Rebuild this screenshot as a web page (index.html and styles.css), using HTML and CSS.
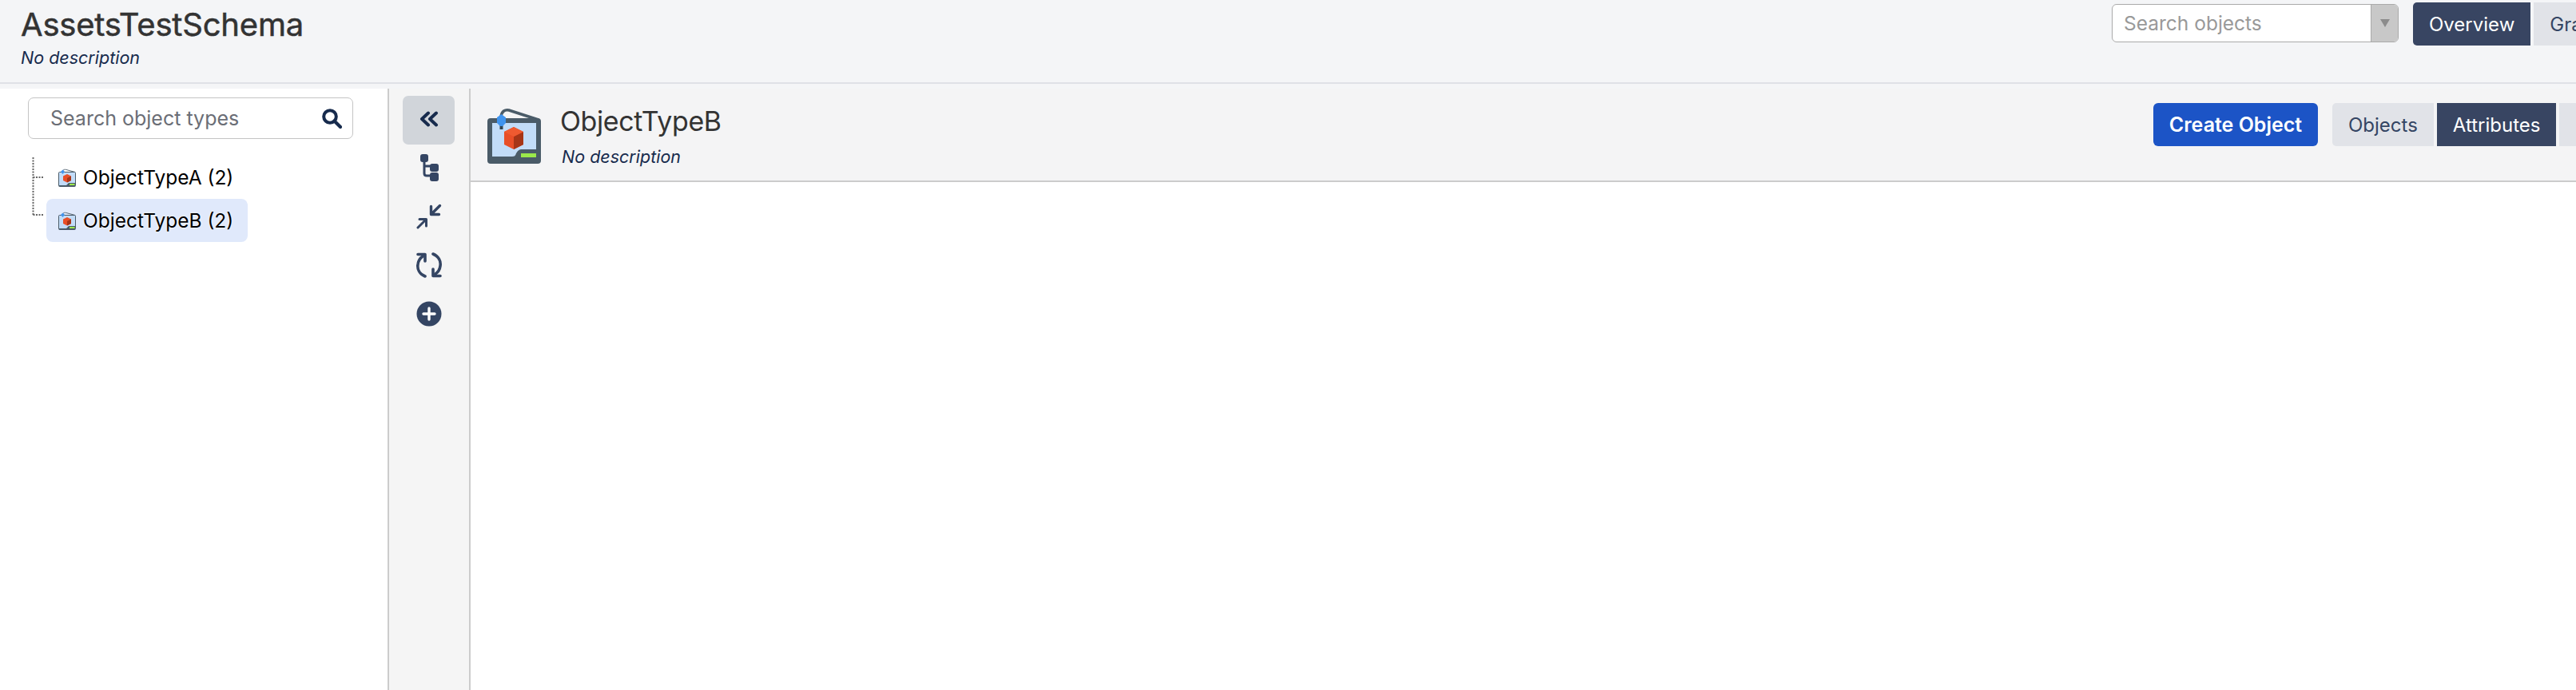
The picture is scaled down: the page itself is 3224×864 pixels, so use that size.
FILE: index.html
```html
<!DOCTYPE html>
<html lang="en">
<head>
  <meta charset="UTF-8" />
  <title>AssetsTestSchema</title>
  <link rel="stylesheet" href="styles.css">
</head>
<body>

  <svg class="sprite" aria-hidden="true">
    <symbol id="printer" viewBox="0 0 67 69">
      <path d="M17 10C18 3 22 1 27 2L64 14" fill="none" stroke="#4a5b68" stroke-width="3.5"/>
      <rect x="0" y="12" width="67" height="57" rx="4" fill="#4a5b68"/>
      <path d="M6 18H61V51H44C39 51 38 53 36 56C35 59 34 60 31 60H6Z" fill="#c2dcf8"/>
      <rect x="42" y="56" width="19" height="5" fill="#9be84b"/>
      <path d="M33 23L45 29V45L33 51L21 45V29Z" fill="#e84e27"/>
      <path d="M33 35L45 29V45L33 51Z" fill="#a63517"/>
      <path d="M33 23L45 29L33 35L21 29Z" fill="#ef5a30"/>
      <rect x="15.500" y="20" width="4" height="6" fill="#33434f"/>
      <path d="M17.500 7L23 11V18L19 22H16L12 18V11Z" fill="#3f93ee"/>
    </symbol>
    <symbol id="printer-small" viewBox="0 0 22 23">
      <path d="M5 4C6 1 8 1 10 1.500L21 4.500" fill="none" stroke="#5b6b78" stroke-width="1"/>
      <rect x="0.500" y="4.500" width="21" height="18" rx="1" fill="#c2dcf8" stroke="#4a5b68"/>
      <path d="M1 21H10L13 18H21V22.500H1Z" fill="#4a5b68"/>
      <rect x="14" y="19" width="6.500" height="2" fill="#9be84b"/>
      <path d="M11 7L16 9.500V15L11 17.500L6 15V9.500Z" fill="#e84e27"/>
      <path d="M11 12L16 9.500V15L11 17.500Z" fill="#a63517"/>
      <path d="M5.500 1.500L8 4L5.500 7L3 4Z" fill="#3f93ee"/>
    </symbol>
  </svg>

  <header class="schema-header">
    <div class="schema-title">
      <h1>AssetsTestSchema</h1>
      <p class="no-desc">No description</p>
    </div>
    <div class="schema-tools">
      <div class="object-search">
        <span class="object-search-text">Search objects</span>
        <span class="object-search-arrow"><i></i></span>
      </div>
      <div class="tabs">
        <a class="tab active">Overview</a>
        <a class="tab">Graph</a>
      </div>
    </div>
  </header>

  <div class="workspace">

    <!-- Type tree -->
    <aside class="type-panel">
      <div class="type-search">
        <span>Search object types</span>
        <svg class="type-search-icon" viewBox="0 0 25 25">
          <circle cx="10" cy="10" r="7.800" fill="none" stroke="#172b4d" stroke-width="4"/>
          <path d="M15.500 15.500L23 23" stroke="#172b4d" stroke-width="4.200" stroke-linecap="round"/>
        </svg>
      </div>
      <div class="tree">
        <svg class="tree-lines" width="14" height="76">
          <path d="M1.500 0V72M1.500 25H14M1.500 72H14" fill="none" stroke="#666" stroke-width="2" stroke-dasharray="2 1.500"/>
        </svg>
        <ul class="tree-list">
          <li class="tree-row">
            <svg class="tree-icon"><use href="#printer-small"/></svg>
            ObjectTypeA (2)
          </li>
          <li class="tree-row selected">
            <svg class="tree-icon"><use href="#printer-small"/></svg>
            ObjectTypeB (2)
          </li>
        </ul>
      </div>
    </aside>

    <!-- Toolbar -->
    <nav class="toolbar">
      <button class="tool active">
        <svg width="24" height="20" viewBox="0 0 24 20">
          <path d="M11 2.500L3 10L11 17.500M21 2.500L13 10L21 17.500" fill="none" stroke="#172b4d" stroke-width="4" stroke-linecap="round" stroke-linejoin="round"/>
        </svg>
      </button>
      <button class="tool">
        <svg width="24" height="34" viewBox="0 0 24 34">
          <path d="M6 6V24C6 26 7 27 9 27H15M6 15H15" fill="none" stroke="#344563" stroke-width="3"/>
          <rect x="1" y="0" width="10" height="10" rx="3" fill="#344563"/>
          <rect x="13" y="12" width="11" height="10" rx="3" fill="#344563"/>
          <rect x="13" y="23" width="11" height="11" rx="3" fill="#344563"/>
        </svg>
      </button>
      <button class="tool">
        <svg width="32" height="32" viewBox="0 0 32 32">
          <path d="M29.500 2.500L20 12M18.500 3.500V13.500H28.500" fill="none" stroke="#344563" stroke-width="3.400" stroke-linecap="round" stroke-linejoin="round"/>
          <path d="M2 30L11 21M4 19.500H12.500V28" fill="none" stroke="#344563" stroke-width="3" stroke-linecap="round" stroke-linejoin="round"/>
        </svg>
      </button>
      <button class="tool">
        <svg width="32" height="32" viewBox="0 0 32 32">
          <path d="M11 30C4 27 1 21 2 15C2.500 11 5 7 8 5" fill="none" stroke="#344563" stroke-width="3.600" stroke-linecap="round"/>
          <path d="M2 2.500H11V11" fill="none" stroke="#344563" stroke-width="3.600" stroke-linejoin="round" stroke-linecap="round"/>
          <path d="M21 2C28 5 31 11 30 17C29.500 21 27 25 24 27" fill="none" stroke="#344563" stroke-width="3.600" stroke-linecap="round"/>
          <path d="M30 29.500H21V21" fill="none" stroke="#344563" stroke-width="3.600" stroke-linejoin="round" stroke-linecap="round"/>
        </svg>
      </button>
      <button class="tool">
        <svg width="32" height="32" viewBox="0 0 32 32">
          <circle cx="16" cy="16" r="15.500" fill="#344563"/>
          <path d="M16 9V23M9 16H23" stroke="#fff" stroke-width="3.400" stroke-linecap="round"/>
        </svg>
      </button>
    </nav>

    <!-- Selected type -->
    <main class="type-main">
      <div class="type-header">
        <svg class="type-icon"><use href="#printer"/></svg>
        <div class="type-title">
          <h2>ObjectTypeB</h2>
          <p class="no-desc">No description</p>
        </div>
        <div class="type-actions">
          <button class="create-btn">Create Object</button>
          <div class="tabs">
            <a class="tab">Objects</a>
            <a class="tab active">Attributes</a>
            <a class="tab"></a>
          </div>
        </div>
      </div>
    </main>

  </div>

</body>
</html>
```

FILE: styles.css
```css
* {
  box-sizing: border-box;
  font-family: Inter, 'Liberation Sans', sans-serif;
}
html, body {
  height: 100%;
}
body {
  margin: 0;
  background: #f4f5f7;
  display: flex;
  flex-direction: column;
  overflow: hidden;
}
h1, h2, p, ul {
  margin: 0;
  padding: 0;
}
.sprite {
  display: none;
}

/* top bar */
.schema-header {
  display: flex;
  height: 105px;
  flex: none;
  border-bottom: 2px solid #dfe1e6;
}
.schema-title {
  flex: 1;
  padding: 8px 0 0 26px;
}
h1 {
  font-size: 40px;
  line-height: 46px;
  font-weight: 400;
  letter-spacing: -0.2px;
  color: #333;
  -webkit-text-stroke: 0.5px #333;
}
.no-desc {
  font-size: 21.500px;
  line-height: 26px;
  font-style: italic;
  color: #172b4d;
}
.schema-title .no-desc {
  margin-top: 5px;
}
.schema-tools {
  flex: none;
  width: 581px;
  display: flex;
  gap: 18px;
  padding-top: 3px;
  overflow: hidden;
}
.object-search {
  flex: none;
  width: 359px;
  height: 48px;
  margin-top: 2px;
  display: flex;
  background: #fff;
  border: 1px solid #aaa;
  border-radius: 6px;
  overflow: hidden;
}
.object-search-text {
  flex: 1;
  padding-left: 14px;
  font-size: 24.500px;
  line-height: 47px;
  color: #999;
}
.object-search-arrow {
  width: 34px;
  background: #c8c8c8;
  border-left: 1px solid #aaa;
  display: flex;
  align-items: center;
  justify-content: center;
}
.object-search-arrow i {
  border-left: 6px solid transparent;
  border-right: 6px solid transparent;
  border-top: 10px solid #8c8c8c;
}

.tabs {
  display: flex;
  gap: 4px;
  flex: none;
}
.tab {
  height: 54px;
  padding: 0 20px;
  display: flex;
  align-items: center;
  flex: none;
  background: #e1e3e8;
  color: #344563;
  font-size: 24px;
}
.tab:first-child {
  border-radius: 5px 0 0 5px;
}
.tab.active {
  background: #384562;
  color: #fff;
}

/* panels */
.workspace {
  flex: 1;
  margin-top: 6px;
  display: flex;
  min-height: 0;
}
.type-panel {
  flex: none;
  width: 487px;
  background: #fff;
  border-right: 2px solid #ccc;
  padding: 11px 0 0 35px;
}
.type-search {
  width: 407px;
  height: 52px;
  display: flex;
  align-items: center;
  justify-content: space-between;
  padding: 0 13px 0 27px;
  border: 1px solid #c4c4c4;
  border-radius: 7px;
  font-size: 25px;
  color: #6b6e76;
}
.type-search-icon {
  width: 25px;
  height: 25px;
}
.tree {
  display: flex;
  margin: 23px 0 0 5px;
}
.tree-lines {
  flex: none;
  margin-right: 4px;
}
.tree-list {
  list-style: none;
  margin-top: -2px;
}
.tree-row {
  height: 54px;
  width: 252px;
  padding-left: 15px;
  display: flex;
  align-items: center;
  gap: 9px;
  font-size: 24.500px;
  color: #000;
  border-radius: 8px;
}
.tree-row.selected {
  background: #e0e9fb;
  text-shadow: 0 0 3px #fff;
}
.tree-icon {
  width: 22px;
  height: 23px;
  flex: none;
}

.toolbar {
  flex: none;
  width: 102px;
  background: #f5f5f5;
  border-right: 2px solid #ccc;
  padding: 9px 0 0 17px;
  display: flex;
  flex-direction: column;
}
.tool {
  width: 65px;
  height: 61px;
  flex: none;
  display: flex;
  align-items: center;
  justify-content: center;
  background: none;
  border: none;
  padding: 0 0 3px;
  border-radius: 7px;
}
.tool.active {
  background: #d1d5da;
}

.type-main {
  flex: 1;
  background: #fff;
  min-width: 0;
}
.type-header {
  height: 117px;
  display: flex;
  background: #f4f4f5;
  border-bottom: 2px solid #ccc;
}
.type-icon {
  flex: none;
  width: 67px;
  height: 69px;
  margin: 25px 0 0 21px;
}
.type-title {
  flex: 1;
  padding: 20px 0 0 24px;
}
h2 {
  font-size: 34px;
  line-height: 42px;
  font-weight: 400;
  letter-spacing: -0.4px;
  color: #333;
}
.type-title .no-desc {
  margin-top: 10px;
  margin-left: 2px;
}
.type-actions {
  flex: none;
  width: 529px;
  display: flex;
  gap: 18px;
  padding-top: 18px;
  overflow: hidden;
}
.create-btn {
  flex: none;
  width: 206px;
  height: 54px;
  background: #1c54c6;
  color: #fff;
  font-size: 25px;
  font-weight: 600;
  border: none;
  border-radius: 6px;
}
```
